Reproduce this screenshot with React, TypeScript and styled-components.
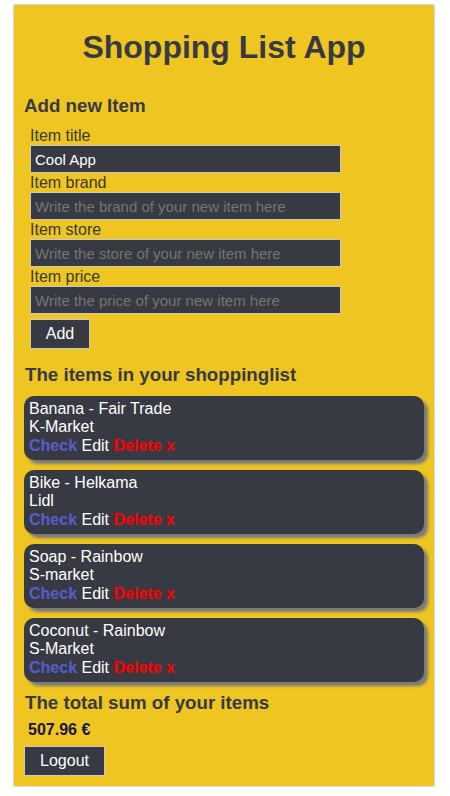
import React from 'react';
import styled, { createGlobalStyle } from 'styled-components';

interface Item {
  title: string;
  brand: string;
  store: string;
}

const items: Item[] = [
  { title: 'Banana', brand: 'Fair Trade', store: 'K-Market' },
  { title: 'Bike', brand: 'Helkama', store: 'Lidl' },
  { title: 'Soap', brand: 'Rainbow', store: 'S-market' },
  { title: 'Coconut', brand: 'Rainbow', store: 'S-Market' },
];

const fields = [
  { label: 'Item title', value: 'Cool App', placeholder: 'Write the title of your new item here' },
  { label: 'Item brand', value: '', placeholder: 'Write the brand of your new item here' },
  { label: 'Item store', value: '', placeholder: 'Write the store of your new item here' },
  { label: 'Item price', value: '', placeholder: 'Write the price of your new item here' },
];

const App: React.FC = () => {
  return (
    <>
      <GlobalStyle />
      <Page>
        <Container>
          <Title>Shopping List App</Title>
          <SectionTitle>Add new Item</SectionTitle>
          <Form onSubmit={(e) => e.preventDefault()}>
            {fields.map((f) => (
              <Field key={f.label}>
                <Label>{f.label}</Label>
                <Input defaultValue={f.value} placeholder={f.placeholder} />
              </Field>
            ))}
            <AddButton type="submit">Add</AddButton>
          </Form>
          <ListTitle>The items in your shoppinglist</ListTitle>
          <List>
            {items.map((item) => (
              <Card key={item.title}>
                <div>
                  {item.title} - {item.brand}
                </div>
                <div>{item.store}</div>
                <Actions>
                  <Action color="#5b5bcf" bold>
                    Check
                  </Action>{' '}
                  <Action color="#ffffff">Edit</Action>{' '}
                  <Action color="#ff0000" bold>
                    Delete x
                  </Action>
                </Actions>
              </Card>
            ))}
          </List>
          <SumTitle>The total sum of your items</SumTitle>
          <Sum>507.96 €</Sum>
          <LogoutButton>Logout</LogoutButton>
        </Container>
      </Page>
    </>
  );
};

const GlobalStyle = createGlobalStyle`
  body {
    margin: 0;
    font-family: 'Liberation Sans', Arial, sans-serif;
    background: #ffffff;
  }
`;

const Page = styled.div`
  padding: 4px 15px 10px 13px;
`;

const Container = styled.div`
  background-color: #eec521;
  border: 1px solid #d8d8d8;
  border-radius: 2px;
  padding: 24px 10px 10px;
  color: #373a42;
`;

const Title = styled.h1`
  margin: 0;
  font-size: 32px;
  font-weight: bold;
  line-height: 37px;
  text-align: center;
`;

const SectionTitle = styled.h3`
  margin: 29px 0 0;
  font-size: 18.72px;
  line-height: 21px;
  font-weight: bold;
`;

const Form = styled.form`
  display: flex;
  flex-direction: column;
  align-items: flex-start;
  padding: 10px 0 0 6px;
`;

const Field = styled.div`
  display: flex;
  flex-direction: column;
`;

const Label = styled.label`
  font-size: 16px;
  line-height: 19px;
  color: #3a3a2e;
`;

const Input = styled.input`
  box-sizing: border-box;
  width: 311px;
  height: 28px;
  margin: 0;
  padding: 0 4px;
  border: 1px solid #c8c8c8;
  background-color: #373a42;
  color: #ffffff;
  font-family: 'Liberation Sans', Arial, sans-serif;
  font-size: 15px;
  outline: none;

  &::placeholder {
    color: #757575;
  }
`;

const DarkButton = styled.button`
  box-sizing: border-box;
  height: 30px;
  border: 1px solid #c8c8c8;
  background-color: #373a42;
  color: #ffffff;
  font-family: 'Liberation Sans', Arial, sans-serif;
  font-size: 16px;
  padding: 0;
  cursor: pointer;
`;

const AddButton = styled(DarkButton)`
  width: 60px;
  margin-top: 5px;
`;

const ListTitle = styled(SectionTitle)`
  margin: 15px 0 0 1px;
`;

const List = styled.div`
  display: flex;
  flex-direction: column;
  gap: 10px;
  margin-top: 11px;
`;

const Card = styled.div`
  width: 400px;
  height: 64px;
  box-sizing: border-box;
  background-color: #373a42;
  color: #ffffff;
  border-radius: 10px;
  padding: 4px 5px;
  font-size: 16px;
  line-height: 18.4px;
  box-shadow: 4px 4px 3px #7a7a7a;
`;

const Actions = styled.div``;

const Action = styled.span<{ color: string; bold?: boolean }>`
  color: ${({ color }) => color};
  font-weight: ${({ bold }) => (bold ? 'bold' : 'normal')};
  cursor: pointer;
`;

const SumTitle = styled(SectionTitle)`
  margin: 10px 0 0 1px;
`;

const Sum = styled.p`
  margin: 8px 0 0 4px;
  font-size: 16px;
  line-height: 18.4px;
  font-weight: bold;
  color: #16164a;
`;

const LogoutButton = styled(DarkButton)`
  display: block;
  width: 81px;
  margin-top: 7px;
`;

export default App;
